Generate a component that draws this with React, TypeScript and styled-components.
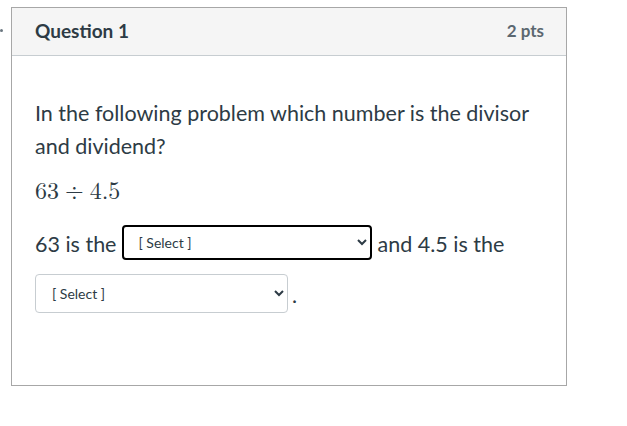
import React from 'react'
import styled, { createGlobalStyle } from 'styled-components'

const GlobalStyle = createGlobalStyle`
  html, body {
    margin: 0;
    padding: 0;
    background: #ffffff;
  }
  body {
    font-family: Lato, "Liberation Sans", sans-serif;
    color: #2d3b45;
  }
`

const Page = styled.div`
  position: relative;
  width: 627px;
  height: 426px;
  padding: 7px 0 0 11px;
  box-sizing: border-box;
`

const SideDot = styled.span`
  position: absolute;
  left: 0;
  top: 29px;
  width: 3px;
  height: 3px;
  border-radius: 50%;
  background: #6b7780;
`

const Card = styled.div`
  width: 556px;
  height: 379px;
  box-sizing: border-box;
  border: 1px solid #a7a7a7;
  display: flex;
  flex-direction: column;
`

const Header = styled.div`
  height: 48px;
  flex-shrink: 0;
  display: flex;
  align-items: center;
  justify-content: space-between;
  padding: 0 22px 3px 23px;
  box-sizing: border-box;
  background: #f5f5f5;
  border-bottom: 1px solid #c7cdd1;
`

const Title = styled.h2`
  margin: 0;
  font-size: 19px;
  font-weight: 700;
  color: #2d3b45;
`

const Points = styled.div`
  font-size: 17px;
  font-weight: 700;
  color: #5b6770;
`

const Body = styled.div`
  padding: 41px 23px 0 23px;
  font-size: 21.5px;
  line-height: 33px;
  color: #2d3b45;
`

const Prompt = styled.p`
  margin: 0 0 13px 0;
`

const MathLine = styled.div`
  font-family: "Latin Modern Math", "DejaVu Serif", "Liberation Serif", serif;
  font-size: 24px;
  line-height: 33px;
  margin-bottom: 10px;
`

const MathOp = styled.span`
  margin: 0 6px;
`

const Answer = styled.div`
  line-height: 51px;
`

const Select = styled.select<{ $wide?: boolean; $focus?: boolean }>`
  font-family: Lato, "Liberation Sans", sans-serif;
  font-size: 14px;
  color: #2d3b45;
  background: #ffffff;
  box-sizing: border-box;
  vertical-align: 4px;
  width: ${({ $wide }) => ($wide ? '253px' : '250px')};
  height: ${({ $focus }) => ($focus ? '35px' : '39px')};
  padding: ${({ $focus }) => ($focus ? '0 2px 0 10px' : '0 6px 0 12px')};
  border: ${({ $focus }) => ($focus ? '2px solid #000000' : '1px solid #c7cdd1')};
  border-radius: 4px;
  margin: ${({ $focus }) => ($focus ? '0 5px 0 6px' : '0 4px 0 0')};
  outline: none;
`

const App: React.FC = () => {
  return (
    <>
      <GlobalStyle />
      <Page>
        <SideDot />
        <Card>
          <Header>
            <Title>Question 1</Title>
            <Points>2 pts</Points>
          </Header>
          <Body>
            <Prompt>In the following problem which number is the divisor and dividend?</Prompt>
            <MathLine>
              63<MathOp>÷</MathOp>4.5
            </MathLine>
            <Answer>
              63 is the
              <Select $focus defaultValue="">
                <option value="">[ Select ]</option>
                <option value="divisor">divisor</option>
                <option value="dividend">dividend</option>
              </Select>
              and 4.5 is the
              <br />
              <Select $wide defaultValue="">
                <option value="">[ Select ]</option>
                <option value="divisor">divisor</option>
                <option value="dividend">dividend</option>
              </Select>
              .
            </Answer>
          </Body>
        </Card>
      </Page>
    </>
  )
}

export default App
